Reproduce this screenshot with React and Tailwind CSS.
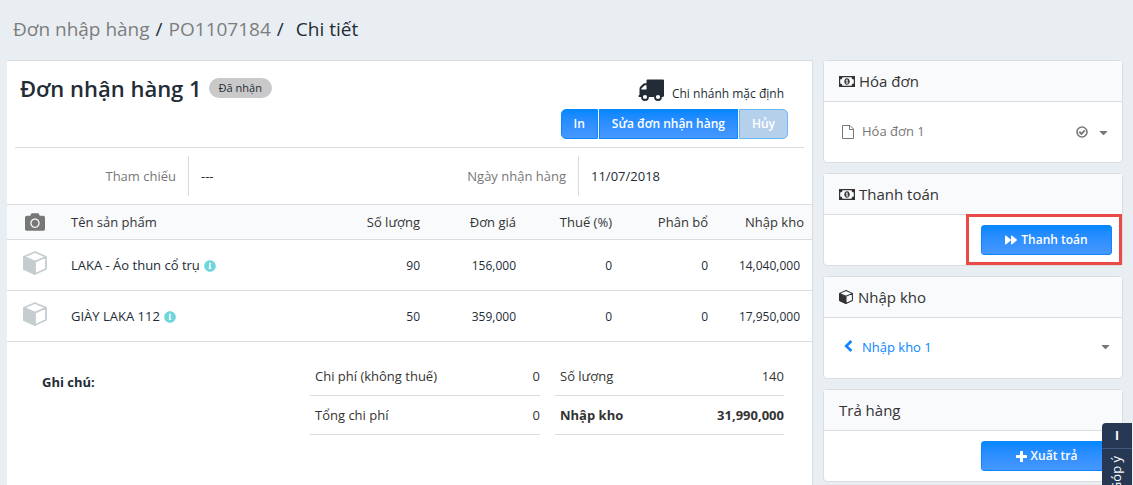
import React from 'react';
import { FaCamera, FaCaretDown, FaInfoCircle, FaForward } from 'react-icons/fa';

const products = [
    { name: 'LAKA - Áo thun cổ trụ', qty: '90', price: '156,000', tax: '0', alloc: '0', total: '14,040,000' },
    { name: 'GIÀY LAKA 112', qty: '50', price: '359,000', tax: '0', alloc: '0', total: '17,950,000' }
];

const costs = [
    { label: 'Chi phí (không thuế)', value: '0' },
    { label: 'Tổng chi phí', value: '0' }
];

const totals = [
    { label: 'Số lượng', value: '140' },
    { label: 'Nhập kho', value: '31,990,000', bold: true }
];

const CubeIcon = ({ className }) => (
    <svg viewBox="0 0 24 24" className={className} fill="none" aria-hidden="true">
        <path d="M0 6 L12 11 V24 L0 18.5 Z" fill="currentColor" />
        <path d="M12 1 L23 5.8 V18 L12 23 L1 18 V5.8 Z M1 5.8 L12 10.6 L23 5.8 M12 10.6 V23" stroke="currentColor" strokeWidth="1.8" strokeLinejoin="round" />
    </svg>
);

const MoneyIcon = ({ className }) => (
    <svg viewBox="0 0 16 11" className={className} aria-hidden="true">
        <path fill="currentColor" fillRule="evenodd" d="M0 0H16V11H0Z M3.5 1.2 A2.3 2.3 0 0 1 1.2 3.5 V7.5 A2.3 2.3 0 0 1 3.5 9.8 H12.5 A2.3 2.3 0 0 1 14.8 7.5 V3.5 A2.3 2.3 0 0 1 12.5 1.2 Z" />
        <path fill="currentColor" fillRule="evenodd" d="M8 2.2 C9.7 2.2 10.7 3.7 10.7 5.5 S9.7 8.8 8 8.8 S5.3 7.3 5.3 5.5 S6.3 2.2 8 2.2 Z M7.6 3.5 L6.6 4.3 L7 4.9 L7.5 4.6 V6.8 H6.7 V7.6 H9.4 V6.8 H8.6 V3.5 Z" />
    </svg>
);

const FileIcon = ({ className }) => (
    <svg viewBox="0 0 12 14" className={className} fill="none" stroke="currentColor" aria-hidden="true">
        <path d="M0.5 0.5 H8 L11.5 4 V13.5 H0.5 Z M7.5 0.5 V4.5 H11.5" />
    </svg>
);

const TruckIcon = ({ className }) => (
    <svg viewBox="0 0 26 22" className={className} aria-hidden="true">
        <path fill="currentColor" fillRule="evenodd" d="M9.5 0.5 H25 Q26 0.5 26 1.5 V16.5 Q26 18 24.4 18 H0.6 V16.5 L1.5 15.8 V10 Q1.5 8.6 2.5 7.6 L5 5 Q5.8 4.3 7 4.3 H8.5 V1.5 Q8.5 0.5 9.5 0.5 Z M3.4 10.5 H8.5 V6.2 H6.8 L3.4 9.6 Z" />
        <circle cx="7" cy="18" r="3" fill="white" stroke="currentColor" strokeWidth="1.8" />
        <circle cx="20" cy="18" r="3" fill="white" stroke="currentColor" strokeWidth="1.8" />
    </svg>
);

const CheckCircleIcon = ({ className }) => (
    <svg viewBox="0 0 12 12" className={className} fill="none" stroke="currentColor" aria-hidden="true">
        <circle cx="6" cy="6" r="5" strokeWidth="1.6" />
        <path d="M3.3 5.8 L5.4 7.8 L8.8 4.4" strokeWidth="1.9" />
    </svg>
);

const ChevronIcon = ({ className }) => (
    <svg viewBox="0 0 9 12" className={className} fill="none" stroke="currentColor" aria-hidden="true">
        <path d="M7.4 1 L2.2 6 L7.4 11" strokeWidth="2.6" />
    </svg>
);

const PlusIcon = ({ className }) => (
    <svg viewBox="0 0 11 11" className={className} aria-hidden="true">
        <path fill="currentColor" d="M4.6 0 H6.4 Q7 0 7 .6 V4 H10.4 Q11 4 11 4.6 V6.4 Q11 7 10.4 7 H7 V10.4 Q7 11 6.4 11 H4.6 Q4 11 4 10.4 V7 H.6 Q0 7 0 6.4 V4.6 Q0 4 .6 4 H4 V.6 Q4 0 4.6 0 Z" />
    </svg>
);

const SideCard = ({ icon, title, children }) => (
    <section className="bg-white border border-[#dadcdf] rounded-sm">
        <h2 className="flex items-center gap-1 h-[41px] px-[15px] bg-[#f9fafc] border-b border-[#dadcdf] text-[15px] font-medium text-[#333]">
            {icon}
            {title}
        </h2>
        {children}
    </section>
);

const ActionButton = ({ icon, children }) => (
    <button className="flex items-center justify-center gap-1 w-[131px] h-[30px] rounded-[3px] border border-[#0a86ff] bg-linear-to-b from-[#0087ff] to-[#4697ff] text-white text-xs font-semibold">
        {icon}
        {children}
    </button>
);

const InfoField = ({ label, value }) => (
    <div className="flex w-[390px] h-10">
        <dt className="flex items-center justify-end w-[174px] pt-px pr-3 border-r border-[#dadcdf] text-[#777]">{label}</dt>
        <dd className="flex items-center pl-3 pt-px">{value}</dd>
    </div>
);

const SummaryTable = ({ rows, className }) => (
    <table className={className}>
        <tbody>
            {rows.map((row) => (
                <tr key={row.label} className="h-[39px] border-b border-[#dadcdf]">
                    <th scope="row" className={`pl-[5px] pt-0.5 text-left ${row.bold ? 'font-bold' : 'font-normal'}`}>{row.label}</th>
                    <td className={`pt-0.5 text-right ${row.bold ? 'font-bold' : 'font-normal'}`}>{row.value}</td>
                </tr>
            ))}
        </tbody>
    </table>
);

const ReceiptPanel = () => (
    <main className="flex-1 min-w-0 bg-white border-t border-r border-[#dadcdf]">
        <div className="mx-2 border-b border-[#dadcdf] flex justify-between pl-[5px] pr-4 h-[87px]">
            <div className="flex items-center gap-[7px] h-[54px]">
                <h1 className="text-[22px] font-semibold">Đơn nhận hàng 1</h1>
                <span className="h-5 px-[10px] leading-5 rounded-full bg-[#c9c9c9] text-[11px]">Đã nhận</span>
            </div>
            <div className="flex flex-col items-end pt-[18px]">
                <div className="flex items-center gap-2 h-[30px] pr-1">
                    <TruckIcon className="w-[26px] h-[22px] mb-2" />
                    <span className="text-xs">Chi nhánh mặc định</span>
                </div>
                <div className="flex h-[30px] text-xs text-white font-semibold">
                    <button className="px-3 rounded-l-[5px] border border-[#0a86ff] bg-linear-to-b from-[#0087ff] to-[#4697ff]">In</button>
                    <button className="ml-px px-3 border border-[#0a86ff] bg-linear-to-b from-[#0087ff] to-[#4697ff]">Sửa đơn nhận hàng</button>
                    <button disabled className="ml-px px-3 rounded-r-[5px] border border-[#6cb6fa] bg-[#b5d0ea]">Hủy</button>
                </div>
            </div>
        </div>

        <dl className="flex pl-2 pt-2 pb-2">
            <InfoField label="Tham chiếu" value="---" />
            <InfoField label="Ngày nhận hàng" value="11/07/2018" />
        </dl>

        <table className="w-full table-fixed border-t border-[#dadcdf]">
            <thead>
                <tr className="h-[35px] bg-[#f9fafc] border-b border-[#dadcdf] text-right text-[#333]">
                    <th className="w-14"><FaCamera size={20} className="mx-auto text-[#777]" aria-label="Ảnh" /></th>
                    <th className="pl-2 pt-0.5 text-left font-medium">Tên sản phẩm</th>
                    <th className="w-24 pr-2 pt-0.5 font-medium">Số lượng</th>
                    <th className="w-24 pr-2 pt-0.5 font-medium">Đơn giá</th>
                    <th className="w-24 pr-2 pt-0.5 font-medium">Thuế (%)</th>
                    <th className="w-24 pr-2 pt-0.5 font-medium">Phân bổ</th>
                    <th className="w-24 pr-2 pt-0.5 font-medium">Nhập kho</th>
                </tr>
            </thead>
            <tbody>
                {products.map((item) => (
                    <tr key={item.name} className="h-[51px] border-b border-[#dadcdf] text-right text-xs">
                        <td><CubeIcon className="w-6 h-6 mx-auto mb-1 text-[#c5cdd0]" /></td>
                        <td className="pl-2 pt-0.5 text-[13px]">
                            <div className="flex items-center gap-1">
                                {item.name}
                                <FaInfoCircle size={12} className="text-[#70d5dc]" />
                            </div>
                        </td>
                        <td className="pr-2 pt-0.5">{item.qty}</td>
                        <td className="pr-2 pt-0.5">{item.price}</td>
                        <td className="pr-2 pt-0.5">{item.tax}</td>
                        <td className="pr-2 pt-0.5">{item.alloc}</td>
                        <td className="pr-3 pt-0.5">{item.total}</td>
                    </tr>
                ))}
            </tbody>
        </table>

        <div className="flex justify-between pl-[35px] pr-7 pt-[14px] text-[#333]">
            <div className="pt-[17px] font-bold text-[#232c36]">Ghi chú:</div>
            <div className="flex gap-[15px]">
                <SummaryTable rows={costs} className="w-[230px]" />
                <SummaryTable rows={totals} className="w-[229px]" />
            </div>
        </div>
    </main>
);

const Sidebar = () => (
    <aside className="flex flex-col gap-[10px] w-[300px] shrink-0">
        <SideCard title="Hóa đơn" icon={<MoneyIcon className="w-4 h-[11px]" />}>
            <div className="flex items-center h-[60px] pl-[18px] pr-3 text-[#777]">
                <FileIcon className="w-3 h-[14px] mr-2" />
                <span>Hóa đơn 1</span>
                <CheckCircleIcon className="w-3 h-3 ml-auto mr-[9px]" />
                <FaCaretDown size={13} />
            </div>
        </SideCard>

        <SideCard title="Thanh toán" icon={<MoneyIcon className="w-4 h-[11px]" />}>
            <div className="relative flex justify-end h-[50px] p-[10px]">
                <ActionButton icon={<FaForward size={12} />}>Thanh toán</ActionButton>
                <div className="absolute -top-px bottom-0 right-0 w-[156px] border-[3px] border-[#ea4a45] pointer-events-none" />
            </div>
        </SideCard>

        <SideCard title="Nhập kho" icon={<CubeIcon className="w-[14px] h-[14px] mr-px" />}>
            <div className="flex items-center h-[60px] pl-5 pr-[10px] text-[#777]">
                <ChevronIcon className="w-[9px] h-3 mr-[9px] mb-1 text-[#0a86ff]" />
                <a href="#" className="text-[#0a86ff]">Nhập kho 1</a>
                <FaCaretDown size={13} className="ml-auto mb-1" />
            </div>
        </SideCard>

        <SideCard title="Trả hàng">
            <div className="flex justify-end h-[50px] p-[10px]">
                <ActionButton icon={<PlusIcon className="w-[11px] h-[11px]" />}>Xuất trả</ActionButton>
            </div>
        </SideCard>
    </aside>
);

const FeedbackTab = () => (
    <div className="fixed right-px -bottom-10 w-[30px] h-[102px] rounded-tl bg-[#263853] text-white">
        <button className="block w-full h-[26px] border-b border-[#41597f] text-xs font-bold" aria-label="Thu gọn">I</button>
        <button className="w-full h-[50px] flex items-center justify-center">
            <span className="[writing-mode:vertical-rl] rotate-180 text-[13px]">Góp ý</span>
        </button>
    </div>
);

const App = () => (
    <div className="h-screen overflow-hidden flex flex-col bg-[#e9eef2] pl-[7px] pr-[10px] text-[13px] text-[#232c36] font-['Open_Sans','Noto_Sans',sans-serif]">
        <nav className="flex items-center gap-[6px] shrink-0 h-[60px] pb-0.5 pl-[6px] text-[19px] whitespace-nowrap">
            <a href="#" className="text-[#7d7d7d]">Đơn nhập hàng</a>
            <span>/</span>
            <a href="#" className="text-[#7d7d7d]">PO1107184</a>
            <span>/</span>
            <span className="pl-[6px]">Chi tiết</span>
        </nav>
        <div className="flex flex-1 gap-[10px] min-h-0">
            <ReceiptPanel />
            <Sidebar />
        </div>
        <FeedbackTab />
    </div>
);

export default App;
